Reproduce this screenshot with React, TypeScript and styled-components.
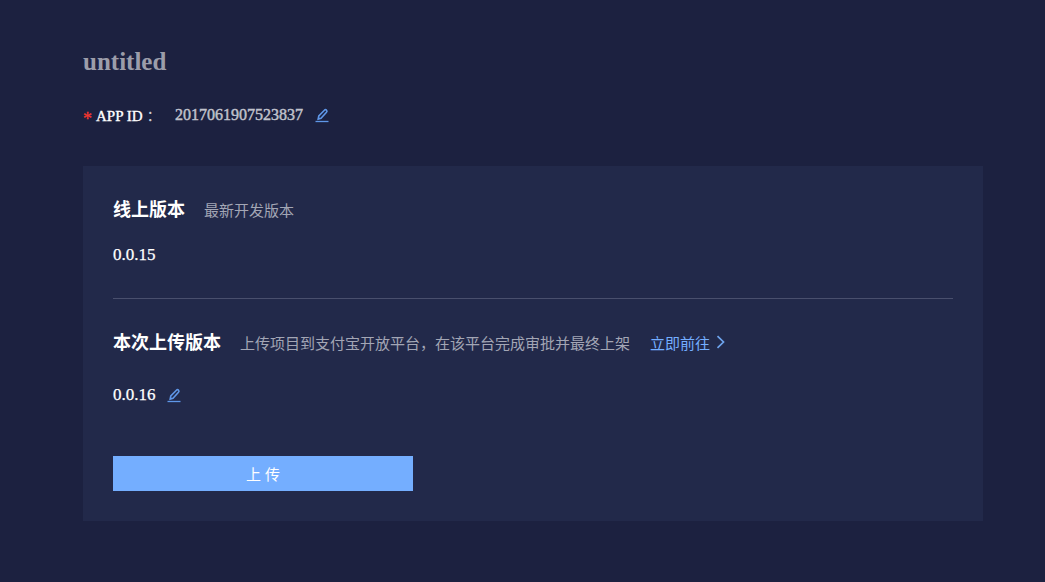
import React from 'react'
import styled, { createGlobalStyle } from 'styled-components'

const GlobalStyle = createGlobalStyle`
  html, body {
    margin: 0;
    padding: 0;
    background-color: #1c2140;
  }
  body {
    font-family: 'Liberation Serif', 'Noto Sans CJK SC', serif;
  }
`

const Page = styled.div`
  width: 1045px;
  height: 582px;
  box-sizing: border-box;
  padding: 48px 62px 0 83px;
  overflow: hidden;
`

const Title = styled.h1`
  margin: 0;
  font-size: 25px;
  line-height: 28px;
  font-weight: 700;
  color: #9c9daa;
`

const AppIdRow = styled.div`
  display: flex;
  align-items: center;
  height: 20px;
  margin-top: 29px;
  font-size: 15px;
`

const Required = styled.span`
  width: 13px;
  margin-top: 7px;
  font-size: 18px;
  line-height: 20px;
  color: #f5372f;
  -webkit-text-stroke: 0.3px #f5372f;
`

const AppIdLabel = styled.span`
  width: 79px;
  margin-top: -1px;
  color: #fff;
  -webkit-text-stroke: 0.35px #fff;
`

const Colon = styled.span`
  margin-left: 4px;
  -webkit-text-stroke: 0;
  color: #c8cad3;
`

const AppIdValue = styled.span`
  font-size: 16px;
  color: #c0c2cc;
  -webkit-text-stroke: 0.45px #c0c2cc;
`

const EditButton = styled.span<{ $gap: number }>`
  display: inline-flex;
  margin-left: ${props => props.$gap}px;
  color: #5f97e8;
`

const Card = styled.section`
  box-sizing: border-box;
  height: 355px;
  margin-top: 41px;
  padding: 30px;
  background-color: #22294a;
`

const HeadRow = styled.div`
  display: flex;
  align-items: center;
  height: 26px;
`

const Heading = styled.h2`
  margin: -2px 19px 0 0;
  font-size: 18px;
  font-weight: 700;
  color: #fff;
`

const Hint = styled.span`
  font-size: 15px;
  color: #a3a6b5;
`

const GoLink = styled.a`
  display: inline-flex;
  align-items: center;
  margin-left: 20px;
  font-size: 15px;
  color: #74aeff;
`

const Version = styled.div<{ $top: number }>`
  display: flex;
  align-items: center;
  height: 20px;
  margin-top: ${props => props.$top}px;
  font-size: 17px;
  color: #fff;
  -webkit-text-stroke: 0.25px #fff;
`

const Divider = styled.hr`
  margin: 33px 0 30px;
  border: 0;
  height: 1px;
  background-color: #494f6d;
`

const UploadButton = styled.button`
  display: block;
  width: 300px;
  height: 35px;
  margin-top: 51px;
  padding: 0 0 0 4px;
  border: 0;
  background-color: #74aeff;
  color: #fff;
  font-family: inherit;
  font-size: 15px;
  letter-spacing: 4px;
`

const PencilIcon = () => (
  <svg width="14" height="15" viewBox="0 0 14 15" fill="none" stroke="currentColor">
    <path d="M3.2 11 L3.8 8 L9.4 2.2 Q10.4 1.2 11.5 2.2 Q12.5 3.2 11.5 4.3 L6 10.2 Z" strokeWidth="1.6" />
    <path d="M0.5 13.5 H13.5" strokeWidth="1.3" />
  </svg>
)

const ChevronIcon = () => (
  <svg width="9" height="14" viewBox="0 0 9 14" fill="none" stroke="#6ea4ee" strokeWidth="1.7" style={{ marginLeft: 6 }}>
    <path d="M1.5 1.2 L7.5 7 L1.5 12.8" />
  </svg>
)

export default function App() {
  return (
    <Page>
      <GlobalStyle />
      <Title>untitled</Title>
      <AppIdRow>
        <Required>*</Required>
        <AppIdLabel>
          APP ID<Colon>：</Colon>
        </AppIdLabel>
        <AppIdValue>2017061907523837</AppIdValue>
        <EditButton $gap={12}>
          <PencilIcon />
        </EditButton>
      </AppIdRow>
      <Card>
        <HeadRow>
          <Heading>线上版本</Heading>
          <Hint>最新开发版本</Hint>
        </HeadRow>
        <Version $top={23}>0.0.15</Version>
        <Divider />
        <HeadRow>
          <Heading>本次上传版本</Heading>
          <Hint>上传项目到支付宝开放平台，在该平台完成审批并最终上架</Hint>
          <GoLink>
            立即前往
            <ChevronIcon />
          </GoLink>
        </HeadRow>
        <Version $top={30}>
          0.0.16
          <EditButton $gap={11}>
            <PencilIcon />
          </EditButton>
        </Version>
        <UploadButton>上传</UploadButton>
      </Card>
    </Page>
  )
}
